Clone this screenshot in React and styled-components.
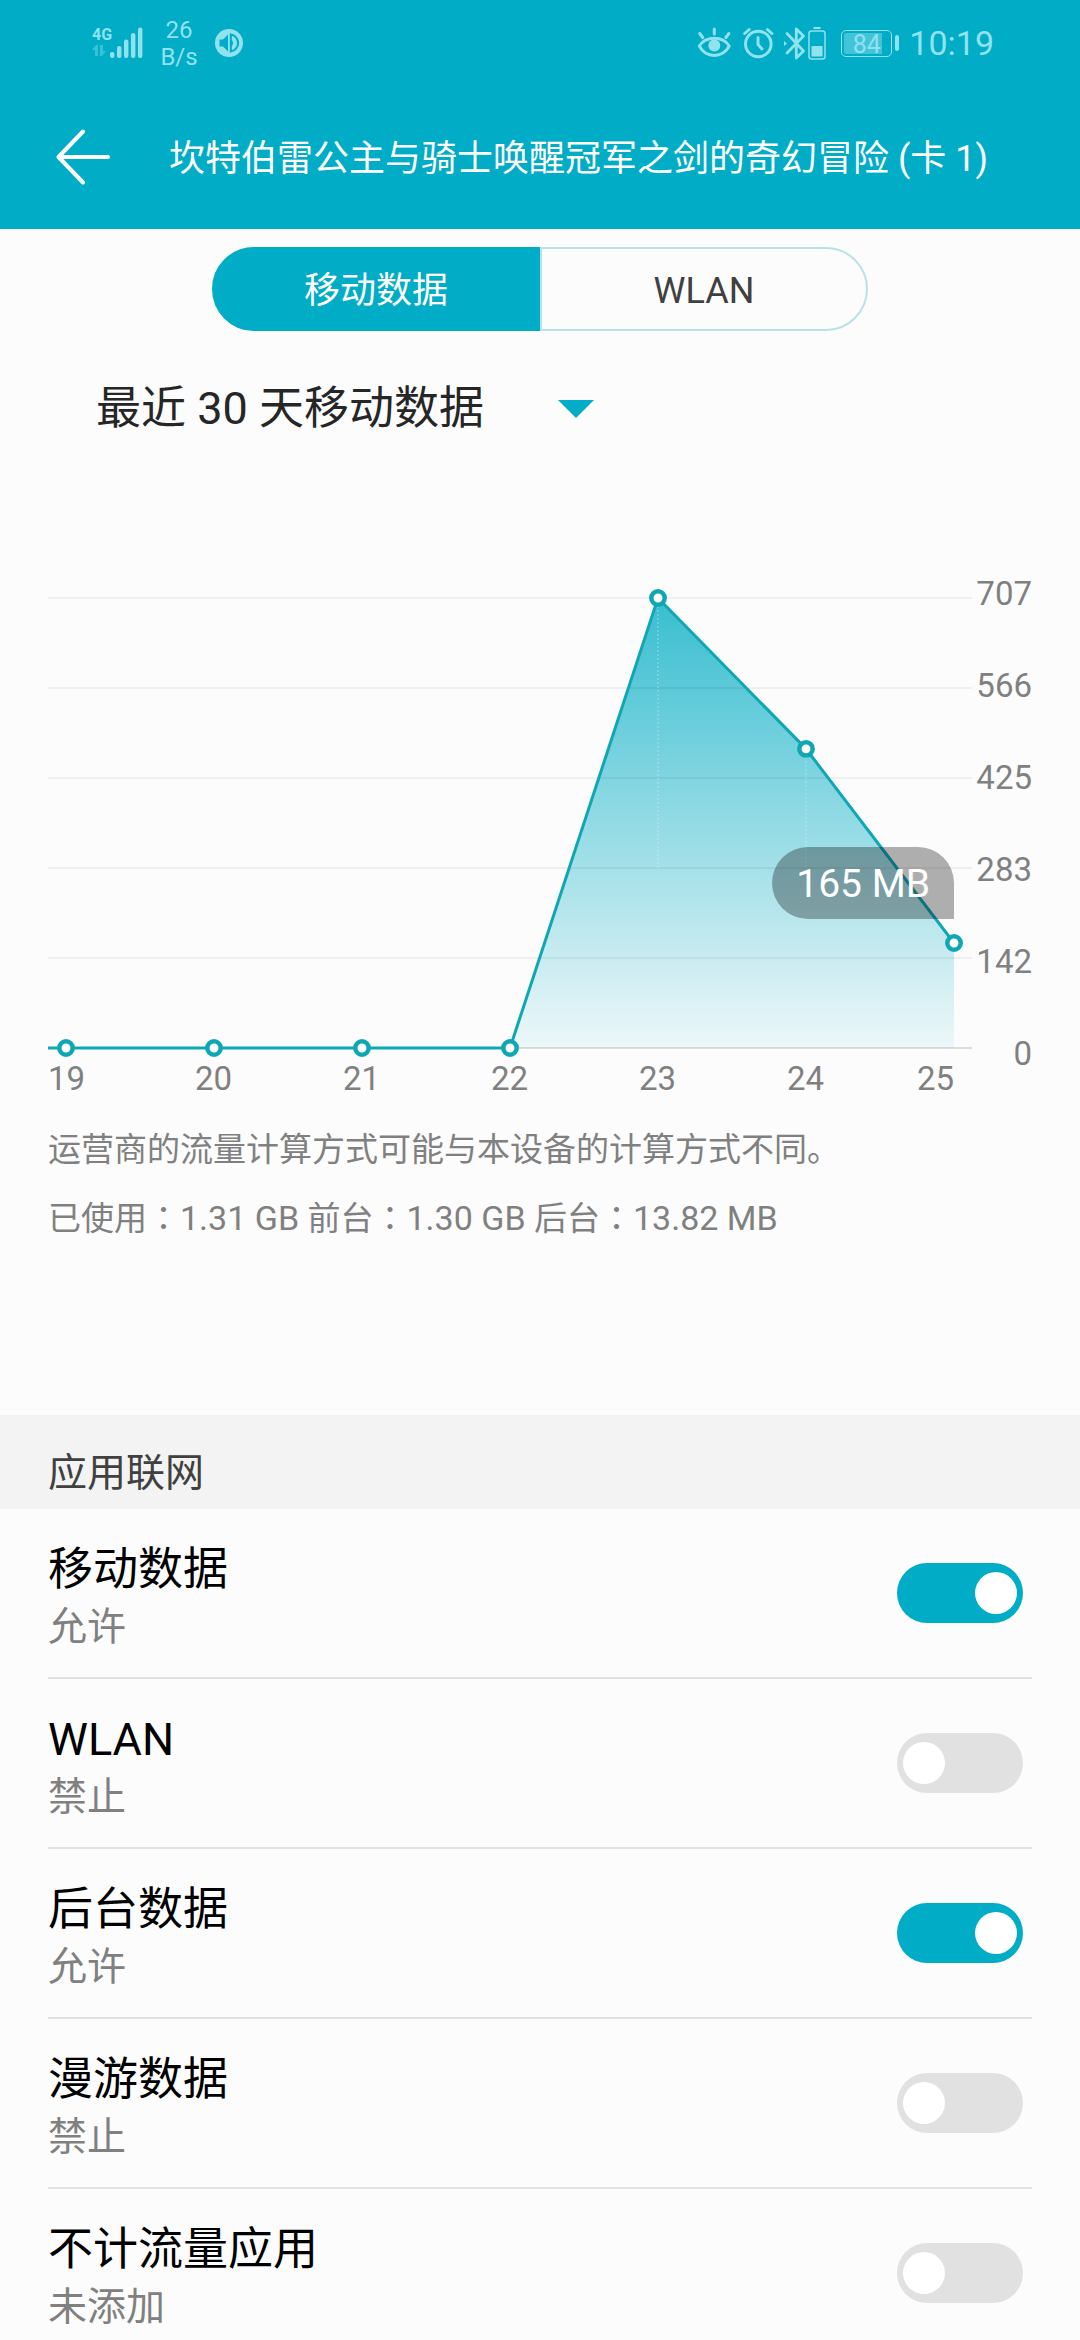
import React, { useState } from "react";
import styled, { createGlobalStyle } from "styled-components";

const ACCENT = "#00acc6";
const LINE = "#10a7b5";
const STATUS = "#90e2ee";

const GlobalStyle = createGlobalStyle`
  *, *::before, *::after { box-sizing: border-box; }
  body {
    margin: 0;
    background: #fcfcfc;
    font-family: Roboto, "Noto Sans CJK SC", sans-serif;
  }
  button, select, input { font: inherit; margin: 0; }
`;

const Screen = styled.div`
  height: 100vh;
  display: flex;
  flex-direction: column;
  background: #fcfcfc;
`;

const Header = styled.header`
  flex: none;
  background: ${ACCENT};
  color: #fff;
`;

/* ---------- status bar ---------- */

const StatusBar = styled.div`
  display: flex;
  align-items: center;
  justify-content: space-between;
  height: 86px;
  padding: 0 86px 0 92px;
  color: ${STATUS};
`;

const StatusGroup = styled.div`
  display: flex;
  align-items: center;
`;

const Signal = styled.div`
  display: flex;
  align-items: flex-end;
  height: 32px;
`;

const Network = styled.div`
  display: flex;
  flex-direction: column;
  width: 18px;
  height: 32px;
  font-size: 16px;
  font-weight: 700;
  line-height: 16px;
`;

const Speed = styled.div`
  width: 38px;
  margin: 0 17px;
  padding-top: 2px;
  font-size: 24px;
  line-height: 27px;
  text-align: center;
`;

const StatusIcon = styled.svg`
  display: block;
  margin-right: ${(p) => p.$gap || 0}px;
`;

const Battery = styled.div`
  display: flex;
  align-items: center;
  gap: 3px;
  margin-right: 10px;

  &::after {
    content: "";
    width: 4px;
    height: 16px;
    border-radius: 2px;
    background: ${STATUS};
  }
`;

const BatteryCell = styled.div`
  width: 51px;
  height: 27px;
  padding: 2px;
  border: 1px solid ${STATUS};
  border-radius: 5px;
  font-size: 25px;
  line-height: 23px;
  text-align: center;
  background: linear-gradient(90deg, rgba(144, 226, 238, 0.45) 84%, transparent 84%) content-box;
`;

const Clock = styled.time`
  font-size: 34px;
  line-height: 40px;
`;

/* ---------- title bar ---------- */

const TitleBar = styled.div`
  display: flex;
  align-items: center;
  gap: 59px;
  height: 143px;
  padding: 0 56px;
`;

const BackButton = styled.button`
  flex: none;
  padding: 0 0 2px;
  border: 0;
  background: none;
  color: inherit;
  line-height: 0;
`;

const Title = styled.h1`
  margin: 0;
  padding-top: 2px;
  font-size: 36px;
  font-weight: 400;
  line-height: 48px;
  white-space: nowrap;
`;

/* ---------- content ---------- */

const Content = styled.main`
  flex: 1;
  min-height: 0;
  overflow-y: auto;
  scrollbar-width: none;
  padding-top: 18px;
`;

const Tabs = styled.div`
  display: grid;
  grid-template-columns: 1fr 1fr;
  margin: 0 212px;
`;

const Tab = styled.button`
  height: 84px;
  padding: 4px 0 0;
  border: 2px solid ${(p) => (p.$active ? ACCENT : "#b9e2e7")};
  background: ${(p) => (p.$active ? ACCENT : "transparent")};
  color: ${(p) => (p.$active ? "#fff" : "#404040")};
  font-size: 36px;
  line-height: 48px;

  &:first-child {
    border-radius: 42px 0 0 42px;
  }
  &:last-child {
    border-radius: 0 42px 42px 0;
  }
`;

const Period = styled.div`
  display: inline-grid;
  align-items: center;
  margin: 46px 0 0 96px;
`;

const PeriodSelect = styled.select`
  grid-area: 1 / 1;
  height: 64px;
  padding: 0 110px 0 0;
  border: 0;
  appearance: none;
  background: none;
  color: #262626;
  font-size: 45px;
  line-height: 64px;
`;

const PeriodArrow = styled.svg`
  grid-area: 1 / 1;
  justify-self: end;
  pointer-events: none;
`;

const Chart = styled.section`
  display: grid;
  grid-template-columns: 1fr 60px;
  margin: 107px 48px 0;
  color: #808080;
  font-size: 33px;
`;

const PlotColumn = styled.div`
  padding-top: 50px;
`;

const Plot = styled.div`
  position: relative;
`;

const PlotDrawing = styled.svg`
  display: block;
  width: 100%;
  overflow: visible;
`;

const Tooltip = styled.output`
  position: absolute;
  padding: 2px 24px 0;
  border-radius: 36px 36px 0 36px;
  background: rgba(0, 0, 0, 0.31);
  color: #fff;
  font-size: 39px;
  line-height: 70px;
  white-space: nowrap;
`;

const DayLabels = styled.div`
  display: grid;
  grid-template-columns: 36px repeat(5, 148fr) 130fr;
  margin-top: 11px;
  padding-right: 18px;
  line-height: 40px;
  text-align: right;
`;

const ValueLabels = styled.div`
  display: flex;
  flex-direction: column;
  text-align: right;
`;

const ValueLabel = styled.span`
  flex: 1;
  display: flex;
  align-items: center;
  justify-content: flex-end;
`;

const Notes = styled.section`
  display: grid;
  gap: 22px;
  margin: 29px 48px 174px;
  color: #808080;
  font-size: 33px;
  line-height: 44px;
`;

const Note = styled.p`
  margin: 0;
`;

const Amount = styled.span`
  font-size: 34px;
`;

const Colon = styled.span`
  font-family: "Noto Sans CJK TC", sans-serif;
`;

const SectionTitle = styled.h2`
  height: 94px;
  margin: 0;
  padding: 31px 48px 0;
  background: #f3f3f3;
  color: #404040;
  font-size: 39px;
  font-weight: 400;
  line-height: 54px;
`;

const Rows = styled.div`
  padding: 0 48px;
`;

const Row = styled.label`
  display: flex;
  align-items: center;
  justify-content: space-between;
  height: 170px;
  padding-right: 9px;
  border-bottom: 2px solid #e2e2e2;

  &:last-child {
    border-bottom-color: transparent;
  }
`;

const RowText = styled.span`
  display: flex;
  flex-direction: column;
  padding-top: 8px;
`;

const RowTitle = styled.span`
  color: #000;
  font-size: 45px;
  line-height: 60px;
`;

const RowState = styled.span`
  color: #808080;
  font-size: 39px;
  line-height: 54px;
`;

const Switch = styled.input`
  display: flex;
  align-items: center;
  width: 126px;
  height: 60px;
  padding: 0 6px;
  border-radius: 30px;
  appearance: none;
  background: #e1e1e1;

  &::before {
    content: "";
    width: 42px;
    height: 42px;
    border-radius: 50%;
    background: #fff;
  }
  &:checked {
    justify-content: flex-end;
    background: ${ACCENT};
  }
`;

/* ---------- data ---------- */

const USAGE = [
  { day: 19, mb: 0 },
  { day: 20, mb: 0 },
  { day: 21, mb: 0 },
  { day: 22, mb: 0 },
  { day: 23, mb: 707 },
  { day: 24, mb: 470 },
  { day: 25, mb: 165 },
];
const SCALE = [707, 566, 425, 283, 142, 0];

const SETTINGS = [
  { id: "mobile", title: "移动数据", state: "允许", on: true },
  { id: "wlan", title: "WLAN", state: "禁止", on: false },
  { id: "background", title: "后台数据", state: "允许", on: true },
  { id: "roaming", title: "漫游数据", state: "禁止", on: false },
  { id: "free", title: "不计流量应用", state: "未添加", on: false },
];

/* ---------- parts ---------- */

function StatusLeft() {
  return (
    <StatusGroup>
      <Signal>
        <Network>
          4G
          <svg width="14" height="14" viewBox="0 0 14 14" fill={STATUS} opacity="0.4">
            <path d="M0 7 4 2h2v11H3V7zM8 2h3v6h3l-4 5H8z" />
          </svg>
        </Network>
        <svg width="33" height="32" viewBox="0 0 33 32" fill={STATUS}>
          <rect x="0" y="25" width="4.400" height="6" rx="2" />
          <rect x="7" y="19" width="4.400" height="12" rx="2" />
          <rect x="14" y="12.500" width="4.400" height="18.500" rx="2" />
          <rect x="21" y="6" width="4.400" height="25" rx="2" />
          <rect x="28" y="0.500" width="4.400" height="30.500" rx="2" />
        </svg>
      </Signal>
      <Speed>
        26
        <br />
        B/s
      </Speed>
      <StatusIcon width="28" height="28" viewBox="0 0 28 28">
        <circle cx="14" cy="14" r="14" fill={STATUS} />
        <path d="M4.500 10.500h3.500l5-5v17l-5-5H4.500z" fill={ACCENT} />
        <path d="M15.800 5.500a8.600 8.600 0 0 1 0 17z" fill="none" stroke={ACCENT} strokeWidth="2" />
        <path d="M16 10.500a4 4 0 0 1 0 7z" fill={ACCENT} />
      </StatusIcon>
    </StatusGroup>
  );
}

function StatusRight() {
  return (
    <StatusGroup>
      <StatusIcon $gap={11} width="35" height="32" viewBox="0 0 35 32" fill="none" stroke={STATUS} strokeWidth="3" strokeLinecap="round">
        <path d="M2.300 19C9 8.800 25.500 8.800 32.300 19 25.500 31.500 9 31.500 2.300 19z" strokeLinejoin="round" />
        <circle cx="17.300" cy="18.500" r="6" fill={STATUS} stroke="none" />
        <path d="M17.300 2v5M2.700 6.500l3 4M31.900 6.500l-3 4" />
      </StatusIcon>
      <StatusIcon $gap={9} width="31" height="32" viewBox="0 0 31 32" fill="none" stroke={STATUS} strokeWidth="3" strokeLinecap="round" strokeLinejoin="round">
        <circle cx="15.300" cy="17" r="12.800" />
        <path d="M15 10.500v7l4 4.500M1.700 6.500l4.500-4M28.900 6.500l-4.500-4" />
      </StatusIcon>
      <StatusIcon $gap={2} width="23" height="33" viewBox="0 0 23 33">
        <path d="M4 6.500 20.500 24 13.300 31V2L20.500 9 4 26" fill="none" stroke={STATUS} strokeWidth="2.800" strokeLinejoin="round" strokeLinecap="round" />
        <path d="M1 14l3 2.500L1 19z" fill={STATUS} />
      </StatusIcon>
      <StatusIcon $gap={15} width="18" height="33" viewBox="0 0 18 33">
        <rect x="1" y="4" width="16" height="28" rx="2.500" fill="none" stroke={STATUS} strokeWidth="1.500" />
        <path d="M5.500 1h7" stroke={STATUS} strokeWidth="2" />
        <rect x="3.500" y="19" width="11" height="10.500" fill={STATUS} />
      </StatusIcon>
      <Battery>
        <BatteryCell>84</BatteryCell>
      </Battery>
      <Clock>10:19</Clock>
    </StatusGroup>
  );
}

function UsageChart() {
  const width = 924;
  const height = 450;
  const max = SCALE[0];
  const points = USAGE.map((d, i) => ({
    x: 18 + i * 148,
    y: height - (d.mb / max) * height,
  }));
  const path = points.map((p) => `L${p.x} ${p.y}`).join("");
  const last = points[points.length - 1];

  return (
    <Chart aria-label="流量图表">
      <PlotColumn>
        <Plot>
          <PlotDrawing viewBox={`0 0 ${width} ${height}`}>
            <defs>
              <linearGradient id="usage" gradientUnits="userSpaceOnUse" x1="0" y1="0" x2="0" y2={height}>
                <stop offset="0" stopColor="#00acc4" stopOpacity="0.78" />
                <stop offset="1" stopColor="#00acc4" stopOpacity="0.06" />
              </linearGradient>
            </defs>
            <path d={`M0 ${height}${path}V${height}z`} fill="url(#usage)" />
            {SCALE.map((v, i) => (
              <path
                key={v}
                d={`M0 ${i * 90}H${width}`}
                stroke="#000"
                strokeOpacity={v === 0 ? 0.12 : 0.05}
                strokeWidth="2"
              />
            ))}
            {points.slice(4, 6).map((p) => (
              <path key={p.x} d={`M${p.x} ${p.y}V${height - 180}`} stroke="#fff" strokeOpacity="0.25" strokeWidth="1.500" strokeDasharray="2 2" />
            ))}
            <path d={`M0 ${height}${path}`} fill="none" stroke={LINE} strokeWidth="3" />
            {points.map((p) => (
              <circle key={p.x} cx={p.x} cy={p.y} r="6.700" fill="#fff" stroke={LINE} strokeWidth="4.500" />
            ))}
          </PlotDrawing>
          <Tooltip
            style={{
              right: `${((width - last.x) / width) * 100}%`,
              bottom: `calc(${((height - last.y) / height) * 100}% + 24px)`,
            }}
          >
            165 MB
          </Tooltip>
        </Plot>
        <DayLabels>
          {USAGE.map((d) => (
            <span key={d.day}>{d.day}</span>
          ))}
        </DayLabels>
      </PlotColumn>
      <ValueLabels>
        {SCALE.map((v) => (
          <ValueLabel key={v}>{v}</ValueLabel>
        ))}
      </ValueLabels>
    </Chart>
  );
}

export default function App() {
  const [tab, setTab] = useState("移动数据");

  return (
    <Screen>
      <GlobalStyle />
      <Header>
        <StatusBar>
          <StatusLeft />
          <StatusRight />
        </StatusBar>
        <TitleBar>
          <BackButton aria-label="返回">
            <svg width="54" height="56" viewBox="0 0 54 56" fill="none" stroke="currentColor" strokeWidth="4" strokeLinecap="round" strokeLinejoin="round">
              <path d="M27 2.500 2.500 28 27 53.500M2.500 28H52" />
            </svg>
          </BackButton>
          <Title>坎特伯雷公主与骑士唤醒冠军之剑的奇幻冒险 (卡 1)</Title>
        </TitleBar>
      </Header>
      <Content>
        <Tabs>
          {["移动数据", "WLAN"].map((name) => (
            <Tab key={name} $active={tab === name} aria-pressed={tab === name} onClick={() => setTab(name)}>
              {name}
            </Tab>
          ))}
        </Tabs>
        <Period>
          <PeriodSelect aria-label="统计周期">
            <option>最近 30 天移动数据</option>
          </PeriodSelect>
          <PeriodArrow width="36" height="18" viewBox="0 0 36 18">
            <path d="M0 0h36L18 18z" fill={ACCENT} />
          </PeriodArrow>
        </Period>
        <UsageChart />
        <Notes>
          <Note>运营商的流量计算方式可能与本设备的计算方式不同。</Note>
          <Note>
            已使用<Colon>：</Colon>
            <Amount>1.31 GB </Amount>前台<Colon>：</Colon>
            <Amount>1.30 GB </Amount>后台<Colon>：</Colon>
            <Amount>13.82 MB</Amount>
          </Note>
        </Notes>
        <SectionTitle>应用联网</SectionTitle>
        <Rows>
          {SETTINGS.map((s) => (
            <Row key={s.id}>
              <RowText>
                <RowTitle>{s.title}</RowTitle>
                <RowState>{s.state}</RowState>
              </RowText>
              <Switch type="checkbox" role="switch" defaultChecked={s.on} />
            </Row>
          ))}
        </Rows>
      </Content>
    </Screen>
  );
}
